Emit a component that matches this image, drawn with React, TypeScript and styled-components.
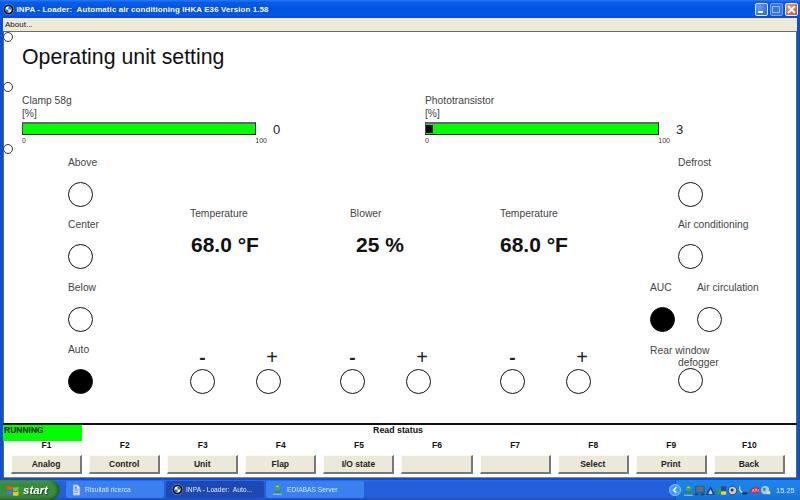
import React from "react";
import styled, { createGlobalStyle } from "styled-components";

const Global = createGlobalStyle`
  html, body { margin: 0; padding: 0; background: #0a52d8; }
  * { box-sizing: border-box; }
  body { font-family: "Liberation Sans", Arial, sans-serif; }
`;

const Screen = styled.div`
  width: 800px; height: 500px; overflow: hidden;
  display: flex; flex-direction: column;
  filter: blur(0.3px);
`;
const Win = styled.div`
  height: 480px; display: flex; flex-direction: column;
  background: #0a4fd6; padding: 0 3px 2px;
`;
const TitleBar = styled.div`
  height: 18px; margin: 0 -3px; padding: 0 2.500px 0 3px;
  display: flex; align-items: center; gap: 2.500px;
  background: linear-gradient(180deg, #2a7cf0 0%, #0a5ce8 12%, #0054e3 50%, #0458e6 85%, #0a48c4 100%);
`;
const TitleText = styled.span`
  flex: 1; color: #fff; font: bold 8px "Liberation Sans", sans-serif;
  letter-spacing: 0.08px; white-space: pre; text-shadow: 1px 0 0 rgba(0,20,120,.4);
`;
const WinBtn = styled.div<{ $kind: "min" | "max" | "close" }>`
  width: 12.500px; height: 13px; margin-left: 0; border-radius: 2px;
  border: 1px solid ${p => p.$kind === "max" ? "#7aa2ee" : "#e8eefc"};
  background: ${p => p.$kind === "close" ? "radial-gradient(circle at 30% 30%, #f09a7c, #d8471e)" : p.$kind === "max" ? "#3a72e0" : "radial-gradient(circle at 30% 30%, #6a9cf6, #2a5fd8)"};
  display: flex; align-items: center; justify-content: center;
`;
const Menu = styled.div`
  height: 14px; padding-left: 2px; background: #ece9d8;
  border-bottom: 1px solid #6e6e68;
  font: 8px/13px "Liberation Sans", sans-serif; color: #111;
`;
const Client = styled.main`
  height: 393px; background: #fff; border-bottom: 2px solid #111;
  box-shadow: inset 1px 0 #666, inset -1px 0 #666;
`;
const Section = styled.section<{ $h?: number }>`
  display: grid; grid-template-columns: 19px 1fr;
  ${p => p.$h ? `height: ${p.$h}px;` : ""}
`;
const Marker = styled.div`
  width: 10px; height: 10px; border-radius: 50%;
  border: 1px solid #333; background: #fff;
`;
const Heading = styled.h1`
  margin: 12px 0 0; font: normal 21.300px/26px "Liberation Sans", sans-serif; color: #111;
`;
const GaugeGrid = styled.div`
  display: grid; grid-template-columns: 403px 1fr; padding-top: 11.500px;
`;
const Gauge = styled.div`
  display: flex; flex-direction: column;
`;
const SmallLabel = styled.div`
  font: 10.300px/13px "Liberation Sans", sans-serif; color: #444; white-space: nowrap;
`;
const BarRow = styled.div`
  display: flex; align-items: flex-start; height: 13px; margin-top: 2px;
`;
const Bar = styled.div`
  width: 234px; height: 13px; background: #00ff00; padding: 1px 1px 1px 0;
  border: 1px solid #222; border-top: 2px solid #666; border-left-color: #444;
`;
const BarFill = styled.div`
  height: 100%; background: #000;
`;
const GaugeValue = styled.span`
  margin: 1px 0 0 17px; font: 13px/14px "Liberation Sans", sans-serif; color: #222;
`;
const Ticks = styled.div`
  width: 245px; display: flex; justify-content: space-between;
  font: 7px/9px "Liberation Sans", sans-serif; color: #333; margin-top: 1px;
`;
const Controls = styled.div`
  display: grid; grid-template-columns: 122px 150px 160px 150px 1fr;
  padding: 11.500px 0 0 46px;
`;
const SideColumn = styled.div`
  display: flex; flex-direction: column; gap: 11.500px;
`;
const Row = styled.div`
  display: flex;
`;
const Cell = styled.div<{ $indent?: number; $w?: number; $gap?: number }>`
  display: flex; flex-direction: column; align-items: flex-start;
  gap: ${p => p.$gap ?? 13}px;
  margin-left: ${p => p.$indent ?? 0}px;
  ${p => p.$w ? `width: ${p.$w}px;` : ""}
`;
const Round = styled.div<{ $on?: boolean; $indent?: number }>`
  width: 25px; height: 25px; border-radius: 50%; flex: none;
  border: 1.500px solid #111; background: ${p => p.$on ? "#000" : "#fff"};
  margin-left: ${p => p.$indent ?? 0}px;
`;
const TwoLineLabel = styled.div`
  height: 25px; padding-top: 2px;
`;
const CtlLabel = styled(SmallLabel)<{ $indent?: number }>`
  margin-left: ${p => p.$indent ?? 0}px; line-height: 12px;
`;
const Group = styled.div`
  display: flex; flex-direction: column; align-items: flex-start; padding-top: 51px;
`;
const GroupLabel = styled(SmallLabel)<{ $indent?: number }>`
  margin-left: ${p => p.$indent ?? 0}px;
`;
const Reading = styled.div<{ $indent?: number }>`
  margin: 13.500px 0 0 ${p => p.$indent ?? 0}px;
  font: bold 21px/24px "Liberation Sans", sans-serif; color: #111; white-space: nowrap;
`;
const Steppers = styled.div`
  margin-top: auto; display: flex; gap: 40.500px;
`;
const Stepper = styled.div`
  width: 25px; display: flex; flex-direction: column; gap: 1.500px;
`;
const Sign = styled.div<{ $plus?: boolean }>`
  height: 20px; text-align: center; white-space: nowrap;
  font: ${p => p.$plus ? "normal" : "bold"} ${p => p.$plus ? 20 : 19}px/${p => p.$plus ? 18 : 20}px "Liberation Sans", sans-serif; color: #222;
  ${p => p.$plus ? "margin-right: -8px;" : ""}
`;
const StatusPanel = styled.div`
  height: 53px; background: #fff; display: flex; flex-direction: column;
  box-shadow: inset 1px 0 #666, inset -1px 0 #666, inset 0 -1px #888;
`;
const StatusRow = styled.div`
  height: 16px; display: grid; grid-template-columns: 79px 1fr 83px;
`;
const Running = styled.div`
  background: #00ff00; padding-left: 1px;
  font: bold 8.500px/10px "Liberation Sans", sans-serif; color: #111;
`;
const StatusText = styled.div`
  text-align: center; font: bold 8.800px/10px "Liberation Sans", sans-serif; color: #111;
`;
const Keys = styled.div`
  display: grid; grid-template-columns: repeat(10, 71.100px); column-gap: 7px;
  padding-left: 8px;
`;
const Key = styled.div`
  display: flex; flex-direction: column; align-items: center;
`;
const KeyName = styled.div`
  height: 14px; font: bold 8.500px/9px "Liberation Sans", sans-serif; color: #111;
`;
const KeyButton = styled.button`
  width: 100%; height: 19px; padding: 0; background: #ece9d8;
  border: 1px solid; border-color: #fbfaf4 #777 #777 #fbfaf4;
  border-right-width: 2px; border-bottom-width: 2px;
  font: bold 8.500px/14px "Liberation Sans", sans-serif; color: #222;
`;
const Taskbar = styled.footer`
  height: 20px; display: flex; align-items: stretch;
  background: linear-gradient(180deg, #2a6ee4 0%, #245edb 12%, #2560dc 80%, #1c4fc0 100%);
`;
const Start = styled.div`
  width: 60px; display: flex; align-items: center; gap: 3px; padding-left: 6px;
  border-radius: 0 10px 10px 0;
  background: linear-gradient(180deg, #4f9a52 0%, #3a8a3e 20%, #3c8d40 75%, #2f6f32 100%);
  box-shadow: inset -3px 0 3px rgba(0,40,0,.4);
  color: #fff; font: italic bold 11.500px "Liberation Sans", sans-serif;
  text-shadow: 1px 1px 1px rgba(0,0,0,.5);
`;
const Tasks = styled.div`
  display: flex; gap: 2px; margin-left: 6px; padding: 1px 0 2px;
`;
const Task = styled.div<{ $active?: boolean }>`
  width: 98px; display: flex; align-items: center; gap: ${p => p.$active ? 3 : 4}px; padding-left: 6px;
  border-radius: 2px; white-space: pre; overflow: hidden;
  background: ${p => p.$active ? "#1e49b0" : "#3a80ee"};
  font: 6.700px "Liberation Sans", sans-serif; color: #dce8ff;
`;
const Tray = styled.div`
  margin-left: auto; width: 125px; display: flex; align-items: center;
  background: linear-gradient(180deg, #1c86ea 0%, #1a7ee4 50%, #1670d4 100%);
  border-left: 1px solid #0b5cc0;
`;
const Chevron = styled.svg`
  margin-left: -7px; flex: none;
`;
const Clock = styled.span`
  margin-left: 5px; font: 7.500px "Liberation Sans", sans-serif; color: #dcecff;
`;
const TrayIcons = styled.div`
  display: flex; align-items: center; margin-left: 2px;
  & > svg { width: 11px; height: 13px; flex: none; }
`;

const Bmw = ({ s = 11 }: { s?: number }) => (
  <svg width={s} height={s} viewBox="0 0 14 14">
    <circle cx="7" cy="7" r="6.800" fill="#111" />
    <circle cx="7" cy="7" r="6.800" fill="none" stroke="#cfd8e8" strokeWidth=".6" />
    <circle cx="7" cy="7" r="4" fill="#fff" />
    <path d="M7 7V3a4 4 0 0 1 4 4zM7 7v4a4 4 0 0 1-4-4z" fill="#2a6bd0" />
  </svg>
);
const Flag = () => (
  <svg width="14" height="13" viewBox="0 0 15 14">
    <path d="M1 3q3-1.500 5.500 0v4Q4 5.600 1 7z" fill="#e8532a" />
    <path d="M7.500 3.400q2.500 1.200 6-.6v4q-3 1.600-6 .6z" fill="#7cc142" />
    <path d="M1 8q3-1.400 5.500 0v4Q4 10.600 1 12z" fill="#3d7de0" />
    <path d="M7.500 8.400q2.500 1.200 6-.6v4q-3 1.600-6 .6z" fill="#f2c52c" />
  </svg>
);
const DocIcon = () => (
  <svg width="9" height="12" viewBox="0 0 12 14" preserveAspectRatio="none">
    <path d="M1.500 1h6L10.500 4v9h-9z" fill="#dfe8f6" stroke="#7f98c4" strokeWidth=".8" />
    <path d="M3 6h6M3 8h6M3 10h5" stroke="#5b7fc0" strokeWidth=".9" />
    <circle cx="5" cy="4" r="1.400" fill="#5b7fc0" />
  </svg>
);
const EdiabasIcon = ({ s = 11 }: { s?: number }) => (
  <svg width={s} height={s + 2} viewBox="0 0 14 14">
    <circle cx="7" cy="4.200" r="3.400" fill="#4aa83e" />
    <path d="M3.500 9c1 1 6 1 7 0v2.500h-7z" fill="#3a8a32" />
    <path d="M1.500 12.500h11v1h-11z" fill="#d8dce4" />
    <path d="M5.500 3h3" stroke="#d8f0c8" strokeWidth="1" />
  </svg>
);

const tray: React.ReactNode[] = [
  <EdiabasIcon key="e" />,
  <svg key="m" viewBox="0 0 13 14"><path d="M2 2h10v7H2z" fill="#5d6f80" stroke="#33404e" strokeWidth=".7"/><path d="M1 10.500h4v2H1zM8 10.500h4v2H8z" fill="#24384e"/></svg>,
  <svg key="a" viewBox="0 0 13 14"><path d="M6.500 2L12 12H1z" fill="#1e3c94"/><path d="M6.500 5.500L9 11H4z" fill="#d8e4f4"/></svg>,
  <svg key="g" viewBox="0 0 13 14"><path d="M1 4h5v8H1z" fill="#2f9d46"/><path d="M6 2h6v6H6z" fill="#1f4f9c"/><path d="M6 8h6v4H6z" fill="#e8d24a"/></svg>,
  <svg key="d" viewBox="0 0 13 14"><circle cx="6.500" cy="7" r="5" fill="#c8ccd4" stroke="#333a48"/><circle cx="6" cy="6.500" r="1.800" fill="#333a48"/></svg>,
  <svg key="s" viewBox="0 0 16 14"><path d="M2.500 1c-.5 5 1 8.500 5 9l6 1" fill="none" stroke="#f0f4fa" strokeWidth="1.600"/><path d="M6 9.500h8v3H6z" fill="#1c2c48"/></svg>,
  <svg key="t" viewBox="0 0 15 14"><path d="M1 10q0-6 6-7h7v7z" fill="#d82020"/><path d="M4 9l2-4 1 4M8 5h3M9.500 5v4M12.500 5v4" stroke="#fff" strokeWidth=".9" fill="none"/></svg>,
  <svg key="w" viewBox="0 0 15 14"><circle cx="7" cy="6.500" r="5.500" fill="#9ecbe8"/><path d="M4 3l4 1-1 4-3-1z" fill="#4f9c50"/><path d="M9 8h5v4H9z" fill="#e8e0b0"/></svg>,
];

const stepper = (
  <Steppers>
    <Stepper><Sign>-</Sign><Round /></Stepper>
    <Stepper><Sign $plus>+</Sign><Round /></Stepper>
  </Steppers>
);

const keys = ["Analog", "Control", "Unit", "Flap", "I/O state", "", "", "Select", "Print", "Back"];

const GaugeBlock = ({ name, value }: { name: string; value: number }) => (
  <Gauge>
    <SmallLabel>{name}</SmallLabel>
    <SmallLabel>[%]</SmallLabel>
    <BarRow>
      <Bar>{value > 0 && <BarFill style={{ width: `${value}%` }} />}</Bar>
      <GaugeValue>{value}</GaugeValue>
    </BarRow>
    <Ticks><span>0</span><span>100</span></Ticks>
  </Gauge>
);

const ReadingGroup = ({ label, value, labelIndent, valueIndent }: { label: string; value: string; labelIndent?: number; valueIndent?: number }) => (
  <Group>
    <GroupLabel $indent={labelIndent}>{label}</GroupLabel>
    <Reading $indent={valueIndent}>{value}</Reading>
    {stepper}
  </Group>
);

export default function App() {
  return (
    <Screen>
      <Global />
      <Win>
        <TitleBar>
          <Bmw />
          <TitleText>{"INPA - Loader:  Automatic air conditioning IHKA E36 Version 1.58"}</TitleText>
          <WinBtn $kind="min"><svg width="7" height="8" viewBox="0 0 7 8"><path d="M0 6h5v2H0z" fill="#fff" /></svg></WinBtn>
          <WinBtn $kind="max"><svg width="8" height="8" viewBox="0 0 8 8"><path d="M.5 1.500h7v6h-7z" fill="none" stroke="#9fbcf4" /></svg></WinBtn>
          <WinBtn $kind="close"><svg width="9" height="9" viewBox="0 0 9 9"><path d="M1 1l7 7M8 1L1 8" stroke="#fff" strokeWidth="1.800" /></svg></WinBtn>
        </TitleBar>
        <Menu>About...</Menu>
        <Client>
          <Section $h={50}>
            <Marker />
            <Heading>Operating unit setting</Heading>
          </Section>
          <Section $h={62}>
            <Marker />
            <GaugeGrid>
              <GaugeBlock name="Clamp 58g" value={0} />
              <GaugeBlock name="Phototransistor" value={3} />
            </GaugeGrid>
          </Section>
          <Section>
            <Marker />
            <Controls>
              <SideColumn>
                <Cell><SmallLabel>Above</SmallLabel><Round /></Cell>
                <Cell><SmallLabel>Center</SmallLabel><Round /></Cell>
                <Cell><SmallLabel>Below</SmallLabel><Round /></Cell>
                <Cell><SmallLabel>Auto</SmallLabel><Round $on /></Cell>
              </SideColumn>
              <ReadingGroup label="Temperature" value="68.0 °F" valueIndent={1} />
              <ReadingGroup label="Blower" value="25 %" labelIndent={10} valueIndent={16} />
              <ReadingGroup label="Temperature" value="68.0 °F" />
              <SideColumn>
                <Cell $indent={28}><SmallLabel>Defrost</SmallLabel><Round /></Cell>
                <Cell $indent={28}><SmallLabel>Air conditioning</SmallLabel><Round /></Cell>
                <Row>
                  <Cell $w={47}><SmallLabel>AUC</SmallLabel><Round $on /></Cell>
                  <Cell><SmallLabel>Air circulation</SmallLabel><Round /></Cell>
                </Row>
                <Cell $gap={0}>
                  <TwoLineLabel>
                    <CtlLabel>Rear window</CtlLabel>
                    <CtlLabel $indent={28}>defogger</CtlLabel>
                  </TwoLineLabel>
                  <Round $indent={28} />
                </Cell>
              </SideColumn>
            </Controls>
          </Section>
        </Client>
        <StatusPanel>
          <StatusRow>
            <Running>RUNNING</Running>
            <StatusText>Read status</StatusText>
            <span />
          </StatusRow>
          <Keys>
            {keys.map((k, i) => (
              <Key key={i}>
                <KeyName>F{i + 1}</KeyName>
                <KeyButton>{k}</KeyButton>
              </Key>
            ))}
          </Keys>
        </StatusPanel>
      </Win>
      <Taskbar>
        <Start><Flag />start</Start>
        <Tasks>
          <Task><DocIcon />Risultati ricerca</Task>
          <Task $active><Bmw />{"INPA - Loader:  Auto..."}</Task>
          <Task><EdiabasIcon />EDIABAS Server</Task>
        </Tasks>
        <Tray>
          <Chevron width="12" height="14" viewBox="0 0 13 14"><circle cx="6.500" cy="7" r="6" fill="#3f9cf0" stroke="#bfe0fa" strokeWidth=".7" /><path d="M8 4L5 7l3 3" fill="none" stroke="#fff" strokeWidth="1.600" /></Chevron>
          <TrayIcons>{tray}</TrayIcons>
          <Clock>15.25</Clock>
        </Tray>
      </Taskbar>
    </Screen>
  );
}
